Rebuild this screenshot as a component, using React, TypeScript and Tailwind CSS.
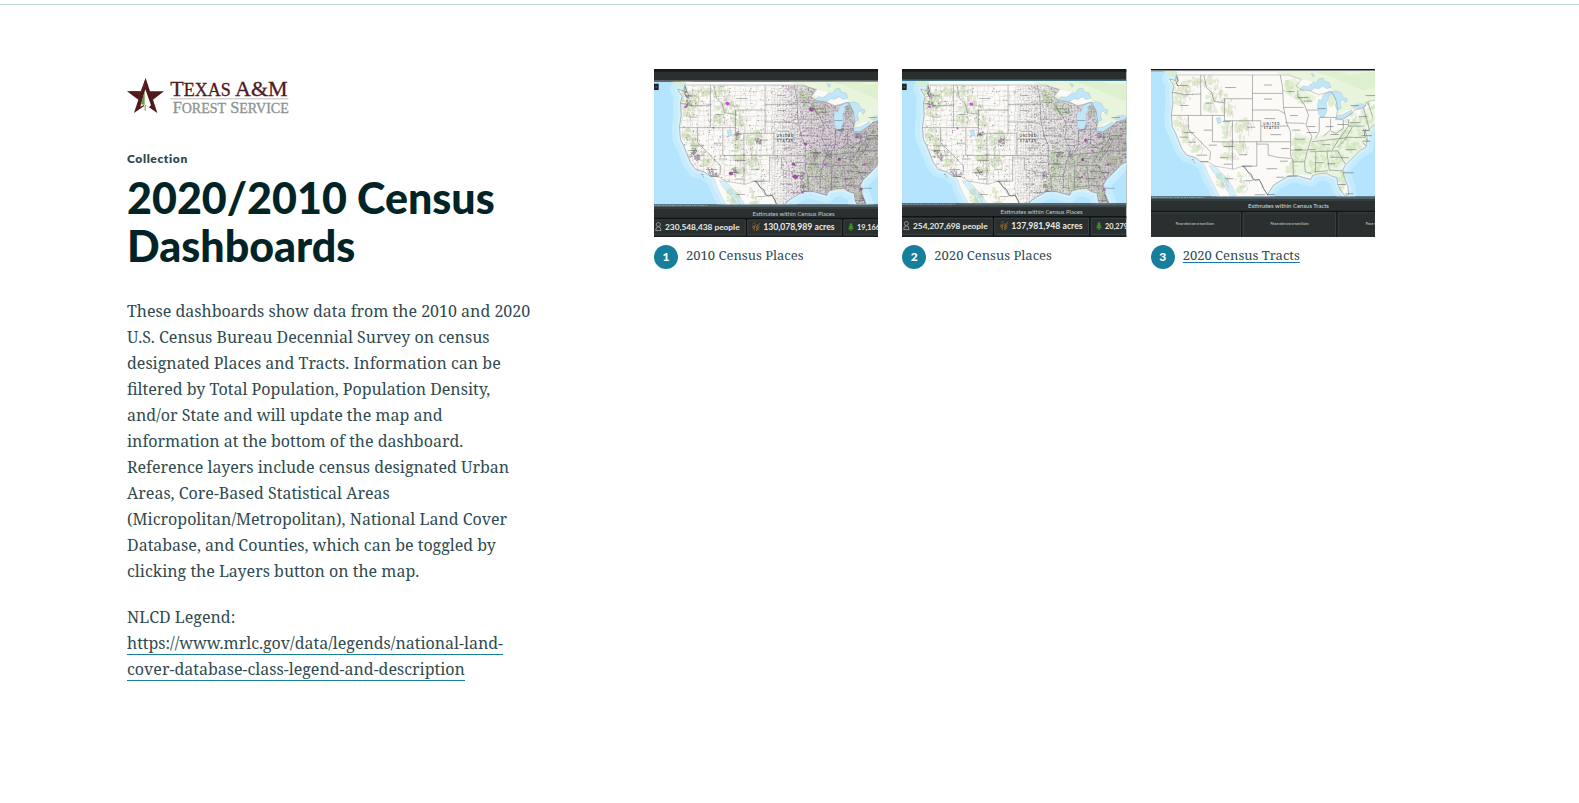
import React from "react";

type Variant = {
  title: string;
  transform: string;
  mapTop: number;
  mapBottom: number;
  density: number;
  seed: number;
  hot: number[][];
  purpleFrom: number;
  panel: string;
  stats?: [string, string, string];
  underlined?: boolean;
};

const COLLECTION: Variant[] = [
  {
    title: "2010 Census Places",
    transform: "translate(12 29) scale(1.055) translate(-18 -27)",
    mapTop: 38,
    mapBottom: 406,
    density: 1,
    seed: 7,
    hot: [[247, 130, 7], [498, 148, 8], [257, 340, 7], [450, 350, 9], [445, 312, 6], [647, 387, 5], [481, 252, 5], [582, 298, 5], [205, 203, 3], [657, 314, 4], [540, 314, 4], [605, 356, 3], [122, 140, 4], [472, 397, 4]],
    purpleFrom: 380,
    panel: "Estimates within Census Places",
    stats: ["230,548,438 people", "130,078,989 acres", "19,166,"],
  },
  {
    title: "2020 Census Places",
    transform: "translate(-3 29) scale(1.055) translate(-18 -27)",
    mapTop: 36,
    mapBottom: 402,
    density: 0.8,
    seed: 23,
    hot: [[228, 132, 6], [187, 205, 3], [571, 241, 5], [562, 299, 5], [638, 314, 4], [627, 389, 4], [693, 291, 4], [591, 272, 3], [560, 350, 3], [103, 140, 4], [614, 352, 3]],
    purpleFrom: 510,
    panel: "Estimates within Census Places",
    stats: ["254,207,698 people", "137,981,948 acres", "20,279,"],
  },
  {
    title: "2020 Census Tracts",
    transform: "translate(-18 -27)",
    mapTop: 7,
    mapBottom: 382,
    density: 0,
    seed: 3,
    hot: [],
    purpleFrom: 0,
    panel: "Estimates within Census Tracts",
    underlined: true,
  },
];

const USA =
  "M93 45 L430 45 L445 51 L468 58 L452 78 L470 90 L495 93 L520 104 L560 94 L572 120 L577 148 L572 176 L592 178 L620 160 L628 150 L655 144 L668 124 L700 118 L700 190 L684 196 L668 210 L660 214 L666 232 L662 262 L645 270 L625 290 L600 315 L592 330 L596 350 L608 380 L610 403 L600 408 L588 392 L578 374 L575 352 L557 347 L545 339 L525 340 L502 346 L497 358 L475 352 L450 345 L430 348 L405 362 L385 375 L372 395 L368 405 L355 385 L342 358 L325 360 L308 335 L293 318 L265 327 L210 318 L190 306 L165 303 L150 292 L125 285 L110 265 L100 240 L92 220 L82 200 L79 165 L84 130 L82 95 L87 78 L74 57 L92 62 Z";

const LAND =
  "M0 0 L60 0 L95 35 L96 45 L92 62 L74 57 L87 78 L82 95 L84 130 L79 165 L82 200 L92 220 L100 240 L110 265 L125 285 L150 292 L165 303 L178 312 L188 340 L202 368 L215 392 L232 425 L262 425 L250 395 L224 360 L204 335 L192 316 L212 320 L240 350 L262 380 L280 425 L360 425 L368 405 L372 395 L385 375 L405 362 L430 348 L450 345 L475 352 L497 358 L502 346 L525 340 L545 339 L557 347 L575 352 L578 374 L588 392 L600 408 L610 403 L608 380 L596 350 L592 330 L600 315 L625 290 L645 270 L662 262 L666 232 L660 214 L668 210 L684 196 L720 180 L720 0 Z";

const CANADA =
  "M350 0 L720 0 L720 118 L668 124 L655 144 L628 150 L605 150 L575 165 L582 130 L602 122 L588 98 L560 92 L545 68 L505 66 L468 58 L445 51 L430 45 L400 42 Z";

const LAKES = [
  "M463 92 L472 78 L488 80 L505 66 L512 70 L522 56 L534 54 L537 64 L552 68 L557 82 L545 86 L532 78 L520 86 L508 84 L498 92 L482 88 Z",
  "M519 158 L516 138 L521 118 L528 122 L534 106 L551 94 L562 98 L547 108 L551 114 L543 128 L545 150 L538 170 L526 172 Z",
  "M558 97 L572 92 L588 98 L594 112 L606 116 L602 128 L590 118 L584 130 L588 144 L576 150 L570 138 L574 122 L566 108 Z",
  "M570 178 L576 166 L592 164 L618 150 L622 157 L604 170 L588 180 Z",
  "M622 141 L634 133 L650 131 L662 137 L642 146 Z",
  "M214 174 L225 172 L228 188 L218 190 Z",
  "M498 40 L504 52 L508 44 Z",
];

const STATES =
  "M81 96 L118 104 L167 102 M167 45 L167 166 M79 166 L238 166 M176 45 L184 82 L200 98 L207 124 L236 128 M236 116 L322 116 M238 116 L238 182 L347 182 M130 166 L130 208 L196 275 L194 300 M202 166 L202 245 M202 245 L435 245 M262 182 L262 327 M322 45 L322 182 M322 100 L412 100 M322 150 L400 150 L418 160 M347 182 L347 245 M347 198 L428 198 M335 245 L335 318 L293 318 M335 252 L369 252 L369 285 L400 292 L438 295 M405 45 L412 80 L415 142 L425 190 L436 215 L436 285 L443 300 L445 345 M414 142 L475 142 M420 188 L478 190 M458 90 L458 108 L478 135 L490 165 L482 195 L500 230 L487 270 L478 305 L480 335 L498 340 M436 270 L485 270 M443 305 L478 305 M484 150 L518 150 M522 172 L522 215 L510 235 M556 176 L556 210 L535 228 M524 172 L572 172 M500 245 L610 232 L660 232 M494 275 L580 272 M512 275 L510 338 M545 275 L552 330 L590 332 M578 274 L600 312 M510 335 L548 332 M610 178 L610 198 L590 225 L560 270 M594 180 L594 205 L572 220 L556 212 M610 198 L658 198 M620 202 L600 238 L575 262 M655 145 L664 178 L672 208 M668 128 L682 170";

const COAST_LABELS = [
  [110, 75], [120, 135], [195, 128], [254, 82], [370, 74], [370, 116], [372, 175], [320, 200], [190, 209], [130, 217], [118, 230], [143, 245], [168, 284], [180, 304], [205, 254], [250, 258], [238, 292], [250, 311], [303, 317], [255, 355], [313, 361], [342, 403], [380, 402], [407, 350], [438, 347], [422, 264], [418, 302], [378, 325], [296, 283], [462, 268], [463, 236], [455, 209], [448, 166], [470, 112], [490, 122], [500, 198], [498, 216], [532, 145], [555, 199], [590, 192], [545, 253], [503, 268], [568, 290], [525, 307], [560, 310], [607, 337], [592, 372], [614, 400], [615, 268], [600, 292], [570, 222], [628, 187], [655, 169], [664, 210], [662, 226], [665, 242], [630, 136], [675, 106], [438, 94], [247, 184], [390, 223],
];

const FOREST = [
  [105, 75, 14, 22], [98, 118, 9, 20], [120, 88, 9, 17], [150, 63, 16, 8], [200, 75, 17, 20], [215, 110, 25, 13], [190, 140, 10, 9], [245, 145, 13, 15], [105, 190, 12, 20], [120, 220, 8, 22], [150, 255, 9, 17], [240, 205, 8, 22], [280, 208, 16, 20], [300, 190, 9, 12], [245, 250, 14, 9], [250, 286, 14, 9], [285, 258, 9, 15], [230, 360, 12, 22], [285, 365, 11, 25], [460, 245, 18, 15], [463, 284, 14, 16], [520, 260, 15, 16], [540, 295, 20, 25], [505, 315, 18, 20], [575, 300, 16, 20], [585, 248, 28, 12], [620, 220, 25, 12], [630, 180, 30, 16], [670, 155, 15, 25], [475, 116, 17, 12], [430, 82, 12, 17], [558, 118, 9, 13], [590, 365, 8, 24], [625, 260, 16, 10], [440, 320, 14, 15],
];

function random(seed: number) {
  let s = seed * 9301 + 49297;
  return () => {
    s = (s * 1103515245 + 12345) % 2147483648;
    return s / 2147483648;
  };
}

function terrain(seed: number) {
  const r = random(seed);
  const blobs: number[][] = [];
  FOREST.forEach(([x, y, rx, ry]) => {
    for (let i = 0; i < 18; i++) {
      const a = r() * Math.PI * 2;
      const d = Math.sqrt(r()) * 1.3;
      blobs.push([x + Math.cos(a) * rx * d, y + Math.sin(a) * ry * d, 2 + r() * 6, 2 + r() * 6]);
    }
  });
  return blobs;
}

function counties(seed: number) {
  const r = random(seed);
  let plains = "";
  let rest = "";
  for (let x = 85; x < 690; x += x > 335 ? 8 : 15) {
    for (let y = 46; y < 405; y += x > 335 ? 8 : 14) {
      const jx = Math.round(x + r() * 4);
      const jy = Math.round(y + r() * 4);
      const step = x > 335 ? 8 : 14;
      const seg = `M${jx} ${jy + step}V${jy}H${jx + step}`;
      if (x > 335) plains += seg;
      else if (r() < 0.8) rest += seg;
    }
  }
  return { plains, rest };
}

function places(v: Variant) {
  const r = random(v.seed);
  const out: { x: number; y: number; s: number; c: string }[] = [];
  const total = Math.round(5200 * v.density);
  for (let i = 0; i < total; i++) {
    const east = r() < 0.88;
    const x = east ? 700 - Math.pow(r(), 1.2) * 330 : 85 + r() * 280;
    const y = 46 + r() * 360;
    const purple = x > v.purpleFrom ? r() < 0.6 : r() < 0.1;
    out.push({ x, y, s: 1 + r() * 2.6, c: purple ? "#8b4a91" : "#645e68" });
  }
  [[100, 70], [103, 95], [118, 235], [128, 250], [165, 293], [178, 303], [240, 185], [302, 203], [237, 290], [425, 300], [430, 335], [465, 240], [500, 240], [535, 165], [580, 185], [600, 365], [665, 218], [680, 195]].forEach(([x, y]) => {
    for (let i = 0; i < 28 * v.density; i++) {
      out.push({ x: x + (r() - r()) * 11, y: y + (r() - r()) * 14, s: 1.5 + r() * 3, c: r() < 0.4 ? "#79437f" : "#4b4652" });
    }
  });
  return out;
}

function PersonIcon() {
  return (
    <g fill="none" stroke="#b7bcbb" strokeWidth="2">
      <circle cx="13" cy="466" r="6" />
      <path d="M5 484 Q5 473 13 473 Q21 473 21 484 Z" />
    </g>
  );
}

function WheatIcon({ x }: { x: number }) {
  return (
    <g transform={`translate(${x} 0)`} fill="none" stroke="#a9762f" strokeWidth="2" strokeLinecap="round">
      <path d="M6 484 L6 469 M6 474 L1 470 M6 474 L11 466 M6 479 L1 475 M4 463 L8 460 M13 484 Q13 474 23 462 M14 478 L12 472 M17 473 L16 467 M16 478 L22 473 M13 483 L20 480" />
    </g>
  );
}

function TreeIcon({ x }: { x: number }) {
  return (
    <path
      transform={`translate(${x} 0)`}
      d="M8 460 L13 467 L11 467 L15 473 L13 473 L17 480 L10 480 L10 485 L6 485 L6 480 L-1 480 L3 473 L1 473 L5 467 L3 467 Z"
      fill="#3c8a2a"
    />
  );
}

function MapThumbnail({ v, index }: { v: Variant; index: number }) {
  const clip = `map-${index}`;
  const usa = `usa-${index}`;
  const haze = `haze-${index}`;
  const grid = counties(v.seed);
  const dark = v.density > 0;
  return (
    <svg viewBox="0 0 672 504" className="block w-full" role="img" aria-label={v.title} fontFamily="Lato, 'Open Sans', sans-serif">
      <defs>
        <clipPath id={clip}>
          <rect x="0" y={v.mapTop} width="672" height={v.mapBottom - v.mapTop} />
        </clipPath>
        <clipPath id={usa}>
          <path d={USA} />
        </clipPath>
        <linearGradient id={haze} x1="0" x2="1">
          <stop offset="0.5" stopColor="#85768a" stopOpacity="0" />
          <stop offset={index === 0 ? "0.68" : "0.8"} stopColor="#85708a" stopOpacity="0.26" />
          <stop offset="1" stopColor="#7b6582" stopOpacity="0.34" />
        </linearGradient>
      </defs>
      <rect width="672" height="504" fill="#2a302f" />
      <rect width="672" height={dark ? 8 : 5} fill="#171a1b" />
      {!dark && <rect y="4" width="672" height="3" fill="#b9bec0" />}
      <g clipPath={`url(#${clip})`}>
        <rect width="672" height="504" fill="#b4e4fe" />
        <g transform={v.transform}>
          <path d={LAND} fill="none" stroke="#c6ecfe" strokeWidth="44" strokeLinejoin="round" />
          <path d={LAND} fill="none" stroke="#d3f1fd" strokeWidth="16" strokeLinejoin="round" />
          <path d={LAND} fill="#fbfaf6" stroke="#a9c3cb" strokeWidth="1" />
          <path d="M0 0 H95 L93 45 L75 50 L45 27 Z" fill="#dceccd" />
          <path d={CANADA} fill="#e8f4dc" />
          <path d="M480 25 L540 10 L610 45 L690 35 L710 75 L650 90 L570 55 Z" fill="#d9efc8" opacity="0.7" />
          <path d="M450 215 L500 235 L600 200 L660 150 L690 130 L690 190 L660 260 L590 320 L600 390 L575 350 L450 343 L440 300 Z" fill="#e6f1d8" opacity="0.7" />
          <path d="M420 60 L450 55 L480 95 L515 110 L500 130 L470 130 L420 100 Z" fill="#e6f1d8" opacity="0.8" />
          <g fill="#bdd8a2" opacity={dark ? 0.5 : 0.42}>
            {terrain(11).map(([x, y, rx, ry], i) => (
              <ellipse key={i} cx={x} cy={y} rx={rx} ry={ry} />
            ))}
          </g>
          <g fill="#cbc2b5" opacity="0.45">
            {terrain(31).slice(0, 340).map(([x, y], i) => (
              <ellipse key={i} cx={x + 14} cy={y + 8} rx="1.5" ry="5" />
            ))}
          </g>
          {dark && (
            <g clipPath={`url(#${usa})`}>
              <rect width="720" height="440" fill={`url(#${haze})`} />
              <path d={grid.plains} fill="none" stroke="#6d6a72" strokeWidth="0.9" opacity="0.5" />
              <path d={grid.rest} fill="none" stroke="#77767a" strokeWidth="0.9" opacity="0.45" />
              <g opacity="0.52">
                {places(v).map((p, i) => (
                  <rect key={i} x={p.x} y={p.y} width={p.s} height={p.s} fill={p.c} />
                ))}
              </g>
            </g>
          )}
          {LAKES.map((d) => (
            <path key={d} d={d} fill="#c0e6f8" stroke="#8fb8cc" strokeWidth="1" strokeLinejoin="round" />
          ))}
          <path d={USA} fill="none" stroke="#6b7274" strokeWidth="1.4" strokeLinejoin="round" opacity="0.7" />
          <path d={STATES} fill="none" stroke="#55595d" strokeWidth="1.7" strokeLinejoin="round" opacity={dark ? 0.65 : 0.75} />
          <path d="M293 318 L300 322 L308 335 L318 342 L325 358 L332 360 L342 358 L350 372 L355 385 L368 405 M95 48 L99 62 L94 68 L98 78" fill="none" stroke="#4d5962" strokeWidth="2" />
          <g fill="#3e4346" opacity={dark ? 0.5 : 0.65}>
            {COAST_LABELS.map(([x, y], i) => (
              <rect key={i} x={x - 14} y={y} width={i % 3 === 0 ? 32 : 24} height="2" />
            ))}
          </g>
          <g fill="#4c5355" fontSize="9" fontWeight="700" textAnchor="middle" letterSpacing="3">
            <text x="380" y="194">UNITED</text>
            <text x="380" y="208">STATES</text>
          </g>
          <path d="M140 298 l7 2 M146 305 l3 3 M655 206 l5 26 M661 207 l-4 20 M662 235 l6 10 M652 247 l10 10" stroke="#6b8390" strokeWidth="2" fill="none" />
        </g>
        {v.hot.map(([x, y, size], i) => {
          const dx = index === 0 ? 27 : 21;
          return (
            <path
              key={i}
              transform={`translate(${x - dx} ${y - 27})`}
              d={`M${-size} -1 L-2 ${-size + 1} L${size - 1} -3 L${size} 3 L1 ${size - 1} L${-size + 2} 3 Z`}
              fill={i === 0 || size < 5 ? "#c23ccb" : "#954597"}
              opacity="0.9"
            />
          );
        })}
      </g>
      {dark && (
        <>
          <rect y={v.mapTop - 4} width="672" height="3" fill={index === 1 ? "#4f8fae" : "#777d7f"} />
          <rect y="44" width="14" height="19" fill="#202628" />
          <path d="M4 54 h5" stroke="#8f9799" strokeWidth="2" />
        </>
      )}
      <rect y={v.mapBottom} width="672" height="7" fill="#56666f" />
      <path d={`M3 ${v.mapBottom + 3} H160`} stroke="#a5b0b5" strokeWidth="2" strokeDasharray="5 2 8 2 3 2" />
      <rect y={v.mapBottom + 9} width="672" height="3" fill="#454c50" />
      {v.stats ? (
        <>
          <text x="418" y={index === 0 ? 439 : 434} fill="#c6cbca" fontSize="18" textAnchor="middle">
            {v.panel}
          </text>
          <path d={index === 0 ? "M0 448 H672 M277 448 V500 M565 448 V500" : "M0 443 H672 M274 443 V500 M563 443 V500"} stroke="#101416" strokeWidth="5" />
          <path d={index === 0 ? "M0 452 H273 V497 H0 M281 497 V452 H561 V497 Z M672 452 H569 V497 H672" : "M0 447 H270 V495 H0 M278 495 V447 H559 V495 Z M672 447 H567 V495 H672"} fill="none" stroke="#454b4e" strokeWidth="2" />
          <rect y="499" width="672" height="5" fill="#1b2022" />
          <g transform={index === 0 ? undefined : "translate(0 -3)"}>
            <PersonIcon />
            <WheatIcon x={294} />
            <TreeIcon x={582} />
            <g fill="#e8eae9" fontSize="25" fontWeight="700">
              <text x="33" y="483">{v.stats[0]}</text>
              <text x="327" y="483" fontSize="26">{v.stats[1]}</text>
              <text x="608" y="482" fontSize="22">{v.stats[2]}</text>
            </g>
          </g>
        </>
      ) : (
        <>
          <text x="412" y="415" fill="#d7dbda" fontSize="18" textAnchor="middle">
            {v.panel}
          </text>
          <path d="M0 427 H672 M272 427 V504 M557 427 V504" stroke="#111618" strokeWidth="4" />
          <path d="M0 431 H268 V504 M276 504 V431 H553 V504 M561 504 V431 H672" fill="none" stroke="#43484c" strokeWidth="2" />
          <g fill="#b9bebd" fontSize="8" fontWeight="700">
            <text x="74" y="468">Please select one or more States</text>
            <text x="358" y="468">Please select one or more States</text>
            <text x="643" y="468">Please select one or more States</text>
          </g>
        </>
      )}
    </svg>
  );
}

function Logo() {
  return (
    <svg viewBox="0 0 486 108" className="block h-9 w-[162px] overflow-visible" role="img" aria-label="Texas A&M Forest Service">
      <path d="M56 0 L69 40 L111 40 L78 65 L91 105 L56 81 L21 105 L34 65 L0 40 L43 40 Z" fill="#501a1d" />
      <path d="M56 0 L56 30 L43 40 L0 40 L38 48 Z" fill="#5b2226" />
      <path d="M55 34 L72 82 L66 88 L56 81 L56 99 L51 99 L51 81 L40 86 Z" fill="#fff" />
      <path d="M53 40 L53 98 L56 98 L56 81 L42 79 Z" fill="#6c9b3c" />
      <g fontFamily="'Liberation Serif', serif">
        <text x="130" y="53" fill="#501a1d" stroke="#501a1d" strokeWidth="1" fontSize="66">
          T<tspan fontSize="54">EXAS</tspan> A&amp;M
        </text>
        <rect x="130" y="61" width="354" height="3" fill="#b9bebb" />
        <text x="137" y="104" fill="#8c9490" stroke="#8c9490" strokeWidth="1" fontSize="49">
          F<tspan fontSize="42">OREST</tspan> S<tspan fontSize="42">ERVICE</tspan>
        </text>
      </g>
    </svg>
  );
}

export default function App() {
  return (
    <div className="min-h-screen bg-white pt-1 font-['Noto_Serif','DejaVu_Serif_Condensed','DejaVu_Serif',serif] text-[#304a4f]">
      <main className="flex items-start border-t border-[#c0d5d8] pt-16 pr-[204px] pl-[127px]">
        <section className="w-[527px] shrink-0 pt-[9px] pr-[116px]">
          <Logo />
          <p className="mt-[37px] font-['Lato',sans-serif] text-[12px] leading-4 font-extrabold tracking-wider">Collection</p>
          <h1 className="mt-[7px] font-['Lato',sans-serif] text-[43px] leading-[48px] font-black text-[#022426]">
            2020/2010 Census Dashboards
          </h1>
          <div className="mt-7 text-[16px] leading-[26px]">
            <p>
              These dashboards show data from the 2010 and 2020 U.S. Census Bureau Decennial Survey on census designated
              Places and Tracts. Information can be filtered by Total Population, Population Density, and/or State and
              will update the map and information at the bottom of the dashboard. Reference layers include census
              designated Urban Areas, Core-Based Statistical Areas (Micropolitan/Metropolitan), National Land Cover
              Database, and Counties, which can be toggled by clicking the Layers button on the map.
            </p>
            <p className="mt-5">
              NLCD Legend:{" "}
              <a
                className="border-b border-[#177f9b]"
                href="https://www.mrlc.gov/data/legends/national-land-cover-database-class-legend-and-description"
              >
                https://www.mrlc.gov/data/legends/national-land-cover-database-class-legend-and-description
              </a>
            </p>
          </div>
        </section>
        <ol className="grid min-w-0 flex-1 grid-cols-3 gap-6">
          {COLLECTION.map((v, i) => (
            <li key={v.title}>
              <a href={`#item-${i + 1}`} className="block">
                <MapThumbnail v={v} index={i} />
                <span className="mt-2 flex items-start gap-2">
                  <span className="flex size-6 shrink-0 items-center justify-center rounded-full bg-[#177f9b] font-['Lato',sans-serif] text-[12px] font-black text-white">
                    {i + 1}
                  </span>
                  <span
                    className={
                      v.underlined
                        ? "text-[13px] leading-5 underline decoration-[#177f9b] underline-offset-2"
                        : "text-[13px] leading-5"
                    }
                  >
                    {v.title}
                  </span>
                </span>
              </a>
            </li>
          ))}
        </ol>
      </main>
    </div>
  );
}
